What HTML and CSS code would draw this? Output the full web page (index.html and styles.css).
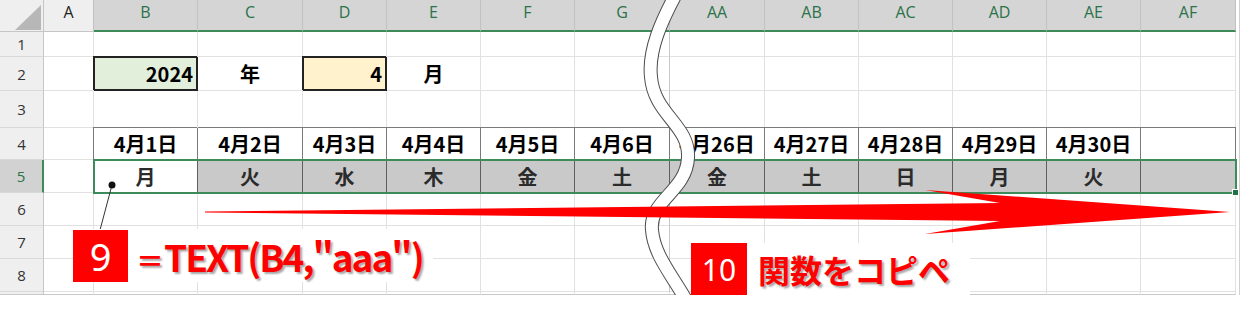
FILE: index.html
```html
<!DOCTYPE html>
<html lang="ja">

<head>
    <meta charset="UTF-8">
    <meta name="viewport" content="width=device-width, initial-scale=1.0">
    <title>TEXT関数 - 曜日</title>
    <link rel="stylesheet" href="styles.css">
</head>

<body>
    <div class="sheet">
        <div class="grid" id="grid"></div>

        <div class="selection"><span class="handle"></span></div>

        <svg class="overlay" width="1240" height="295" viewBox="0 0 1240 295">
            <path class="wave-edge" d="M676,-6 C662,20 648,50 651,77 C654,115 690,125 688,158 C686,192 649,200 652,230 C654,255 672,275 686,300" />
            <path class="wave-body" d="M676,-6 C662,20 648,50 651,77 C654,115 690,125 688,158 C686,192 649,200 652,230 C654,255 672,275 686,300" />
            <path class="arrow" d="M205,211.5 L1000,203 L925,190 L1230,212 L925,234 L1000,221 L205,212.5 Z" />
            <line class="leader" x1="112" y1="185" x2="100" y2="230" />
            <circle class="leader-dot" cx="112" cy="185" r="3.5" />
        </svg>

        <div class="note note-formula">
            <span class="badge">9</span>
            <span class="note-text"><span class="eq">＝</span>TEXT(B4,"aaa")</span>
        </div>
        <div class="note note-copy">
            <span class="badge">10</span>
            <span class="note-text">関数をコピペ</span>
        </div>
    </div>

    <script>
        const grid = document.getElementById('grid');
        const cols = ['A', 'B', 'C', 'D', 'E', 'F', 'G', 'AA', 'AB', 'AC', 'AD', 'AE', 'AF'];
        const dates = ['4月1日', '4月2日', '4月3日', '4月4日', '4月5日', '4月6日', '4月26日', '4月27日', '4月28日', '4月29日', '4月30日', ''];
        const days = ['月', '火', '水', '木', '金', '土', '金', '土', '日', '月', '火', ''];

        function addCell(text, classes) {
            const cell = document.createElement('div');
            cell.className = 'cell ' + (classes || '');
            cell.textContent = text || '';
            grid.appendChild(cell);
        }

        // column header row
        addCell('', 'corner');
        cols.forEach((name, i) => addCell(name, i === 0 ? 'col-head plain' : 'col-head'));
        addCell('', 'edge head-edge');

        for (let r = 1; r <= 8; r++) {
            addCell(String(r), r === 5 ? 'row-head active' : 'row-head');
            cols.forEach((name, i) => {
                let text = '';
                let classes = name === 'G' ? 'seam' : '';
                if (r === 2) {
                    if (name === 'B') { text = '2024'; classes += ' input input-green'; }
                    if (name === 'C') text = '年';
                    if (name === 'D') { text = '4'; classes += ' input input-yellow'; }
                    if (name === 'E') text = '月';
                }
                if (r === 4 && i > 0) {
                    text = dates[i - 1];
                    classes += i === 1 ? ' date first' : ' date';
                }
                if (r === 5 && i > 0) {
                    text = days[i - 1];
                    classes += i === 1 ? ' day white' : ' day';
                }
                addCell(text, classes);
            });
            addCell('', 'edge');
        }

        // partly visible row 9
        addCell('', 'row-head tail');
        cols.forEach(() => addCell('', 'tail'));
        addCell('', 'edge tail');
    </script>
</body>

</html>
```

FILE: styles.css
```css
body {
    margin: 0;
    background-color: #fff;
    font-family: "Noto Sans CJK JP", "Noto Sans", sans-serif;
}

.sheet {
    position: relative;
    width: 1240px;
    height: 316px;
    overflow: hidden;
}

.grid {
    display: grid;
    grid-template-columns: 44px 50px 104px 105px 84px 94px 94px 95px 95px 94px 94px 94px 94px 95px 4px;
    grid-template-rows: 32px 25px 34px 37px 32px 33px 33px 33px 33px 3px;
}

.cell {
    box-sizing: border-box;
    border-right: 1px solid #e1e1e1;
    border-bottom: 1px solid #e1e1e1;
    display: flex;
    align-items: center;
    justify-content: center;
    font-size: 20px;
    font-weight: bold;
    color: #000;
    white-space: nowrap;
    overflow: visible;
}

/* headers */
.corner {
    background-color: #efefef;
    border-right-color: #c6c6c6;
    border-bottom-color: #c6c6c6;
    justify-content: flex-end;
    align-items: flex-end;
    padding: 0 2px 1px 0;
}

.corner::after {
    content: "";
    width: 0;
    height: 0;
    border-left: 26px solid transparent;
    border-bottom: 25px solid #b7b7b7;
}

.col-head {
    background-color: #d5d5d5;
    color: #2a7248;
    font-family: "Open Sans", "Noto Sans", sans-serif;
    font-weight: normal;
    font-size: 16px;
    align-items: flex-start;
    padding-top: 1px;
    border-right-color: #c2c2c2;
    border-bottom: 2px solid #3e8a5a;
}

.col-head.plain {
    background-color: #efefef;
    color: #222;
    border-bottom: 1px solid #c6c6c6;
}

.head-edge {
    background-color: #fff;
    border-bottom: 1px solid #c6c6c6;
}

.row-head {
    background-color: #efefef;
    color: #333;
    font-family: "Open Sans", "Noto Sans", sans-serif;
    font-weight: normal;
    font-size: 15px;
    border-right-color: #c6c6c6;
    border-bottom-color: #d9d9d9;
}

.row-head.active {
    background-color: #d2d2d2;
    color: #2a7248;
    border-right: 2px solid #3e8a5a;
}

.seam {
    border-right-color: #c8c8c8;
}

.edge {
    border-right-color: #d0d0d0;
    border-bottom: none;
}

.tail {
    border-bottom-color: #c8c8c8;
}

/* input cells */
.input {
    justify-content: flex-end;
    padding-right: 3px;
    border-right: 2px solid #222;
    border-bottom: 2px solid #222;
    box-shadow: -1px -1px 0 #222, inset 1px 1px 0 #222;
}

.input-green {
    background-color: #e2efda;
}

.input-yellow {
    background-color: #fff2cc;
}

/* date table */
.date {
    border-right-color: #7a7a7a;
    border-bottom-color: #7a7a7a;
    box-shadow: 0 -1px 0 #7a7a7a;
}

.date.first {
    box-shadow: -1px -1px 0 #7a7a7a;
}

.day {
    background-color: #c9c9c9;
    color: #2b2b2b;
    border-right-color: #5f5f5f;
    border-bottom-color: #5f5f5f;
}

.day.white {
    background-color: #fff;
}

/* selection frame over B5:AF5 */
.selection {
    position: absolute;
    left: 93px;
    top: 159px;
    width: 1144px;
    height: 35px;
    box-sizing: border-box;
    border: 2px solid #3e8a5a;
}

.handle {
    position: absolute;
    right: -4px;
    bottom: -4px;
    width: 5px;
    height: 5px;
    background-color: #217346;
    border: 1px solid #fff;
}

/* drawing layer */
.overlay {
    position: absolute;
    left: 0;
    top: 0;
    pointer-events: none;
}

.wave-edge {
    fill: none;
    stroke: #4d4d4d;
    stroke-width: 14;
}

.wave-body {
    fill: none;
    stroke: #fff;
    stroke-width: 12;
}

.arrow {
    fill: #ff0000;
}

.leader {
    stroke: #333;
    stroke-width: 1;
}

.leader-dot {
    fill: #111;
}

/* callouts */
.note {
    position: absolute;
    display: flex;
    align-items: center;
    background-color: #fff;
    box-sizing: border-box;
}

.note-formula {
    left: 73px;
    top: 229px;
    width: 360px;
    height: 53px;
    gap: 12px;
}

.note-copy {
    left: 691px;
    top: 243px;
    width: 279px;
    height: 57px;
    padding-bottom: 5px;
    gap: 11px;
}

.badge {
    flex: none;
    display: flex;
    align-items: center;
    justify-content: center;
    width: 55px;
    height: 52px;
    background-color: #ff0000;
    color: #fff;
    font-family: "Noto Sans", sans-serif;
    font-size: 38px;
}

.note-copy .badge {
    width: 56px;
    font-size: 30px;
}

.note-text {
    color: #ff0000;
    font-weight: bold;
    white-space: nowrap;
    text-shadow: 2px 2px 2px rgba(0, 0, 0, 0.35);
}

.note-formula .note-text {
    font-size: 37px;
    letter-spacing: -2px;
}

.eq {
    font-size: 28px;
    margin: 0 2px 0 -4px;
}

.note-copy .note-text {
    font-size: 32px;
}
```
